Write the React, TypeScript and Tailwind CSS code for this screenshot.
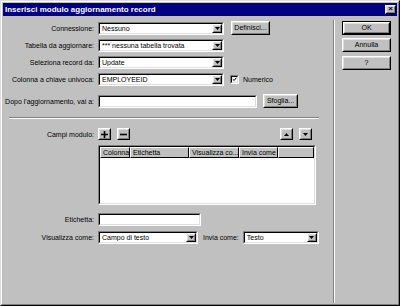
import React from 'react';

const font = { fontFamily: '"Liberation Sans", Arial, sans-serif' };

const Raised = ({ className = '', children }: { className?: string; children?: React.ReactNode }) => (
  <div className={`border border-t-white border-l-white border-b-black border-r-black ${className}`}>
    <div className="w-full h-full flex items-center justify-center border border-t-[#dfdfdf] border-l-[#dfdfdf] border-b-[#808080] border-r-[#808080] bg-[#c0c0c0] whitespace-nowrap">
      {children}
    </div>
  </div>
);

const Sunken = ({ className = '', children }: { className?: string; children?: React.ReactNode }) => (
  <div className={`border border-t-[#808080] border-l-[#808080] border-b-white border-r-white ${className}`}>
    <div className="w-full h-full flex items-center border border-t-black border-l-black border-b-[#dfdfdf] border-r-[#dfdfdf] bg-white">
      {children}
    </div>
  </div>
);

const DownTri = () => (
  <svg width="5" height="3" viewBox="0 0 5 3"><path d="M0 0h5L2.5 3z" fill="#000" /></svg>
);

const Select = ({ value, className = '' }: { value: string; className?: string }) => (
  <Sunken className={className}>
    <span className="flex-1 pl-[2px] leading-none truncate">{value}</span>
    <Raised className="w-[10px] h-full">
      <DownTri />
    </Raised>
  </Sunken>
);

const Label = ({ children }: { children: React.ReactNode }) => (
  <div className="w-[96px] shrink-0 text-right pr-[4px] leading-none whitespace-nowrap">{children}</div>
);

export default function App() {
  return (
    <div style={font} className="w-[400px] h-[306px] text-[7px] text-black bg-[#c0c0c0] border border-t-[#dfdfdf] border-l-[#dfdfdf] border-b-black border-r-black">
      <div className="h-full border border-t-white border-l-white border-b-[#808080] border-r-[#808080] flex flex-col">
        {/* Title bar */}
        <div className="mx-[1px] mt-[1px] h-[13px] bg-[#000080] flex items-center justify-between pl-[2px] pr-[1px]">
          <span className="text-white font-bold text-[8px] leading-none">Inserisci modulo aggiornamento record</span>
          <Raised className="w-[11px] h-[9px]">
            <span className="text-[8px] font-bold leading-none -mt-[1px]">×</span>
          </Raised>
        </div>

        {/* Body */}
        <div className="flex flex-1">
          {/* Left panel */}
          <div className="w-[330px] flex flex-col">
            <div className="flex items-center mt-[5px] h-[14px]">
              <Label>Connessione:</Label>
              <Select value="Nessuno" className="w-[126px] h-[13px]" />
              <Raised className="ml-[7px] w-[39px] h-[14px]">Definisci...</Raised>
            </div>
            <div className="flex items-center mt-[4px] h-[13px]">
              <Label>Tabella da aggiornare:</Label>
              <Select value="*** nessuna tabella trovata" className="w-[126px] h-[13px]" />
            </div>
            <div className="flex items-center mt-[4px] h-[13px]">
              <Label>Seleziona record da:</Label>
              <Select value="Update" className="w-[126px] h-[13px]" />
            </div>
            <div className="flex items-center mt-[4px] h-[13px]">
              <Label>Colonna a chiave univoca:</Label>
              <Select value="EMPLOYEEID" className="w-[126px] h-[13px]" />
              <Sunken className="ml-[6px] w-[9px] h-[9px]">
                <svg width="7" height="7" viewBox="0 0 7 7"><path d="M1 3l2 2 3-4" stroke="#000" strokeWidth="1.4" fill="none" /></svg>
              </Sunken>
              <span className="ml-[4px] leading-none">Numerico</span>
            </div>
            <div className="flex items-center mt-[8px] h-[14px]">
              <Label>Dopo l'aggiornamento, vai a:</Label>
              <Sunken className="w-[159px] h-[13px]" />
              <Raised className="ml-[6px] w-[35px] h-[14px]">Sfoglia...</Raised>
            </div>

            <div className="mt-[9px] ml-[7px] w-[310px] border-t border-t-[#808080] border-b border-b-white" />

            <div className="flex items-center mt-[9px] h-[12px]">
              <Label>Campi modulo:</Label>
              <Raised className="w-[13px] h-[12px]">
                <svg width="7" height="7" viewBox="0 0 7 7"><path d="M0 3.5h7M3.5 0v7" stroke="#000" strokeWidth="1.6" /></svg>
              </Raised>
              <Raised className="ml-[6px] w-[13px] h-[12px]">
                <svg width="7" height="7" viewBox="0 0 7 7"><path d="M0 3.5h7" stroke="#000" strokeWidth="1.6" /></svg>
              </Raised>
              <div className="flex-1" />
              <Raised className="w-[13px] h-[12px]">
                <svg width="5" height="3" viewBox="0 0 5 3"><path d="M0 3h5L2.5 0z" fill="#000" /></svg>
              </Raised>
              <Raised className="ml-[6px] mr-[20px] w-[13px] h-[12px]">
                <DownTri />
              </Raised>
            </div>

            <div className="flex mt-[5px]">
              <div className="w-[96px] shrink-0" />
              <div className="w-[218px] h-[60px] border border-t-[#808080] border-l-[#808080] border-b-white border-r-white">
                <div className="w-full h-full border border-t-black border-l-black border-b-[#dfdfdf] border-r-[#dfdfdf] bg-white flex flex-col">
                  <div className="flex h-[11px]">
                    {[
                      ['Colonna', 'w-[30px]'],
                      ['Etichetta', 'w-[59px]'],
                      ['Visualizza co...', 'w-[50px]'],
                      ['Invia come', 'w-[39px]'],
                      ['', 'flex-1'],
                    ].map(([t, w], i) => (
                      <div key={i} className={`${w} h-full bg-[#c0c0c0] border-t border-l border-t-white border-l-white border-r border-b border-r-black border-b-black flex items-center pl-[2px] leading-none whitespace-nowrap overflow-hidden`}>
                        {t}
                      </div>
                    ))}
                  </div>
                </div>
              </div>
            </div>

            <div className="flex items-center mt-[8px] h-[13px]">
              <Label>Etichetta:</Label>
              <Sunken className="w-[103px] h-[13px]" />
            </div>
            <div className="flex items-center mt-[5px] h-[13px]">
              <Label>Visualizza come:</Label>
              <Select value="Campo di testo" className="w-[100px] h-[13px]" />
              <span className="ml-[5px] leading-none">Invia come:</span>
              <Select value="Testo" className="ml-[4px] w-[76px] h-[13px]" />
            </div>
          </div>

          {/* Vertical separator */}
          <div className="ml-[1px] mt-[4px] mb-[1px] w-[2px] border-l border-l-[#808080] border-r border-r-white" />

          {/* Right panel */}
          <div className="flex flex-col ml-[7px] pt-[5px] gap-[3px]">
            <div className="border border-black">
              <Raised className="w-[47px] h-[12px]">OK</Raised>
            </div>
            <Raised className="w-[49px] h-[14px]">Annulla</Raised>
            <Raised className="w-[49px] h-[14px] mt-[1px]">?</Raised>
          </div>
        </div>
      </div>
    </div>
  );
}
